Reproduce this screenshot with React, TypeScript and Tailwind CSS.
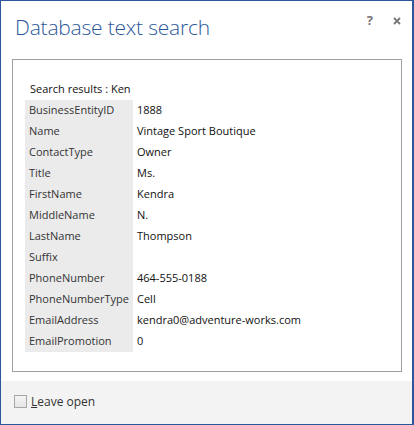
import React from "react";

const rows: [string, string][] = [
  ["BusinessEntityID", "1888"],
  ["Name", "Vintage Sport Boutique"],
  ["ContactType", "Owner"],
  ["Title", "Ms."],
  ["FirstName", "Kendra"],
  ["MiddleName", "N."],
  ["LastName", "Thompson"],
  ["Suffix", ""],
  ["PhoneNumber", "464-555-0188"],
  ["PhoneNumberType", "Cell"],
  ["EmailAddress", "kendra0@adventure-works.com"],
  ["EmailPromotion", "0"],
];

export default function App() {
  return (
    <div
      className="w-[414px] h-[425px] bg-white border-t border-l border-b border-r-2 border-[#2b579a] flex flex-col text-[11px] text-[#222]"
      style={{ fontFamily: '"Open Sans", "Noto Sans", sans-serif' }}
    >
      <div className="h-[58px] flex items-start justify-between pl-[14px] pr-[8px]">
        <div className="pt-[12px] text-[21px] font-light text-[#2b579a] leading-[28px] tracking-[-0.2px]">
          Database text search
        </div>
        <div className="flex items-center gap-[20px] pt-[12px] pr-[3px]">
          <span className="text-[13px] font-bold text-[#777] leading-[14px]">?</span>
          <svg width="8" height="8" viewBox="0 0 8 8" className="mt-[1px]">
            <path d="M1 1 L7 7 M7 1 L1 7" stroke="#777" strokeWidth="1.8" />
          </svg>
        </div>
      </div>
      <div className="ml-[11px] mr-[10px] h-[313px] border border-[#a0a0a0] pt-[19px] pl-[12px]">
        <div className="h-[21px] flex items-center pl-[5px] text-[#111]">Search results : Ken</div>
        <div className="flex flex-col">
          {rows.map(([k, v]) => (
            <div key={k} className="flex h-[21px] items-center">
              <div className="w-[108px] h-full bg-[#ebebeb] pl-[4px] flex items-center text-[#333] whitespace-nowrap">{k}</div>
              <div className="pl-[4px] text-[#111]">{v}</div>
            </div>
          ))}
        </div>
      </div>
      <div className="flex-1" />
      <div className="h-[43px] bg-[#f3f3f3] flex items-center pl-[13px] gap-[4px] pb-[2px]">
        <div className="w-[13px] h-[13px] border border-[#a6a6a6] bg-gradient-to-b from-[#f4f4f4] to-[#e6e6e6]" />
        <span className="text-[#333] text-[12px]">
          <span className="underline">L</span>eave open
        </span>
      </div>
    </div>
  );
}
